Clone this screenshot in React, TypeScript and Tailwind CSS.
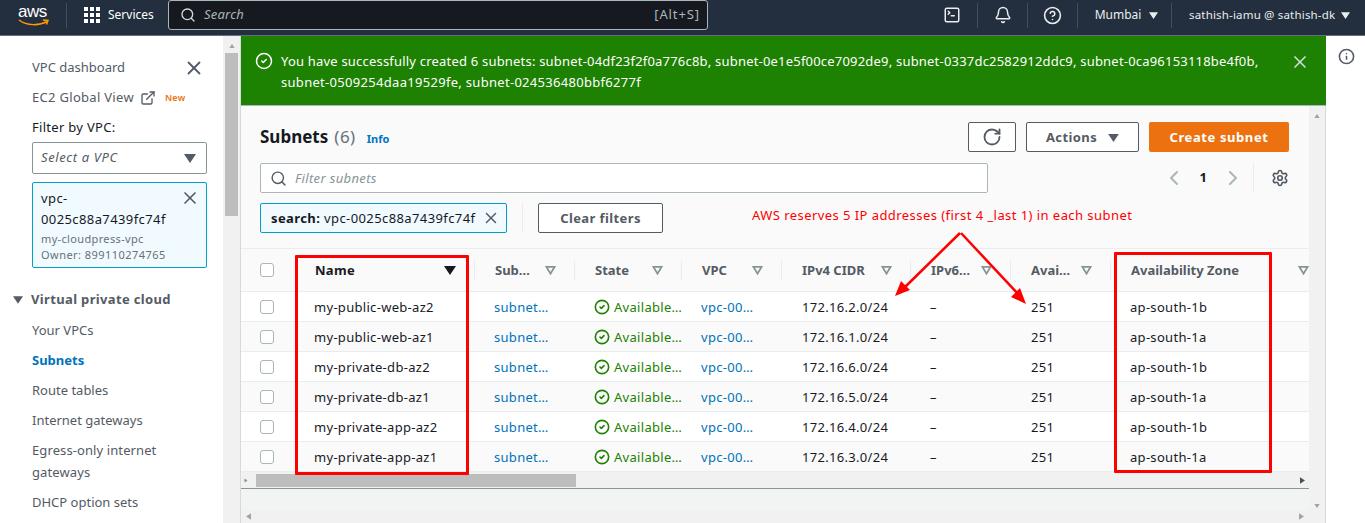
import React from 'react';
import { CircleCheck, ExternalLink, RotateCw, Settings, ChevronLeft, ChevronRight, Search, X, Bell, CircleHelp, Info, SquareTerminal } from 'lucide-react';

const rows = [
    { name: 'my-public-web-az2', cidr: '172.16.2.0/24', az: 'ap-south-1b' },
    { name: 'my-public-web-az1', cidr: '172.16.1.0/24', az: 'ap-south-1a' },
    { name: 'my-private-db-az2', cidr: '172.16.6.0/24', az: 'ap-south-1b' },
    { name: 'my-private-db-az1', cidr: '172.16.5.0/24', az: 'ap-south-1a' },
    { name: 'my-private-app-az2', cidr: '172.16.4.0/24', az: 'ap-south-1b' },
    { name: 'my-private-app-az1', cidr: '172.16.3.0/24', az: 'ap-south-1a' },
];

const Caret = ({ className }: { className: string }) => (
    <svg viewBox="0 0 12 9" className={className} fill="currentColor">
        <path d="M0 0h12L6 9z" />
    </svg>
);

const SortIcon = () => (
    <svg viewBox="0 0 12 10" className="w-[11px] h-[9px] text-[#879596] shrink-0" fill="none" stroke="currentColor" strokeWidth="2">
        <path d="M1.5 1h9L6 8.5z" />
    </svg>
);

const HeaderCell = ({ label, width }: { label: string; width: string }) => (
    <div className={`${width} h-full flex items-center shrink-0`}>
        <div className="flex-1 h-5 flex items-center justify-between border-r border-[#eaeded] pl-[20px] pr-[18px]">
            <span className="font-bold text-[#545b64] pt-[2px]">{label}</span>
            <SortIcon />
        </div>
    </div>
);

const Checkbox = () => <div className="w-[14px] h-[14px] rounded-[3px] border border-[#aab7b8] bg-white" />;

const Divider = () => <div className="w-px h-[25px] bg-[#414d5c] shrink-0" />;

export default function App() {
    return (
        <div className="w-[1365px] h-[523px] overflow-hidden relative bg-white text-[13px] text-[#16191f] font-['Noto_Sans',sans-serif]">
            <header className="h-9 pb-[5px] bg-[#232f3e] border-b border-[#687078] flex items-center text-white text-[12px]">
                <div className="w-[66px] pl-[18px] pt-[2px] flex flex-col items-start">
                    <span className="font-['Liberation_Sans',sans-serif] text-[17px] leading-[14px] tracking-[-0.5px]">aws</span>
                    <svg viewBox="0 0 32 8" className="w-[32px] h-2">
                        <path d="M1 1c8 6 20 6 29 1M25 1l5 .5-1.500 4" fill="none" stroke="#ff9900" strokeWidth="1.500" />
                    </svg>
                </div>
                <Divider />
                <div className="w-[101px] pl-[17px] flex items-center gap-2">
                    <div className="grid grid-cols-3 gap-[2px] w-[16px] shrink-0">
                        {Array.from({ length: 9 }).map((_, i) => (
                            <div key={i} className="w-1 h-1 bg-white" />
                        ))}
                    </div>
                    <span className="text-[12px]">Services</span>
                </div>
                <div className="w-[540px] h-[30px] bg-[#16191f] border border-[#aab7b8] rounded-[3px] flex items-center pl-[11px] pr-[7px] text-[#aab7b8] shrink-0">
                    <Search size={16} strokeWidth={2} className="text-[#d5dbdb] mr-[8px]" />
                    <span className="italic text-[13px] flex-1 tracking-[0.2px]">Search</span>
                    <span className="text-[13px] tracking-[0.9px] text-[#aab7b8]">[Alt+S]</span>
                </div>
                <div className="flex-1 flex items-center justify-end text-[#eaeded]">
                    <SquareTerminal size={18} strokeWidth={2} className="mr-[16px]" />
                    <Divider />
                    <div className="w-[49px] flex justify-center"><Bell size={18} strokeWidth={2} /></div>
                    <Divider />
                    <div className="w-[49px] flex justify-center"><CircleHelp size={19} strokeWidth={2} /></div>
                    <Divider />
                    <div className="w-[93px] flex items-center justify-center gap-2 text-[12px] pl-[4px]">
                        Mumbai <Caret className="w-[9px] h-[7px]" />
                    </div>
                    <Divider />
                    <div className="w-[193px] flex items-center pl-[17px] gap-[6px] text-[11.500px] tracking-[0.18px] whitespace-nowrap">
                        sathish-iamu @ sathish-dk <Caret className="w-[9px] h-[7px]" />
                    </div>
                </div>
            </header>

            <div className="flex h-[487px]">
                <aside className="w-[223px] shrink-0 pl-8 pr-4 pt-[20px] text-[#545b64]">
                    <div className="flex items-center justify-between h-[24px]">
                        <span className="text-[13px]">VPC dashboard</span>
                        <X size={22} strokeWidth={2} className="mr-[2px]" />
                    </div>
                    <div className="flex items-center h-[22px] mt-[7px] tracking-[0.3px]">
                        <span>EC2 Global View</span>
                        <ExternalLink size={16} strokeWidth={2} className="ml-[6px]" />
                        <span className="ml-[9px] text-[9px] font-semibold text-[#ec7211]">New</span>
                    </div>
                    <div className="mt-[8px] text-[#16191f] h-[20px] leading-[20px] tracking-[0.3px]">Filter by VPC:</div>
                    <div className="mt-[5px] h-[32px] border border-[#879596] rounded-[2px] flex items-center justify-between pl-2 pr-[10px] italic tracking-[0.6px]">
                        Select a VPC
                        <Caret className="w-[12px] h-[9px]" />
                    </div>
                    <div className="mt-[8px] h-[86px] border border-[#00a1c9] rounded-[2px] bg-[#f1faff] pl-2 pr-[8px] pt-[5px] relative">
                        <div className="text-[#16191f] leading-[21px] w-[150px] break-words tracking-[0.4px]">vpc-<br />0025c88a7439fc74f</div>
                        <div className="text-[11px] leading-[16px] mt-[1px] text-[#687078] tracking-[0.35px]">my-cloudpress-vpc</div>
                        <div className="text-[11px] leading-[16px] text-[#687078] tracking-[0.45px]">Owner: 899110274765</div>
                        <X size={20} strokeWidth={2} className="absolute right-[6px] top-[5px]" />
                    </div>
                    <div className="-ml-[19px] mt-[22px] flex items-center gap-[8px] font-bold tracking-[0.35px]">
                        <Caret className="w-[10px] h-[8px]" />
                        Virtual private cloud
                    </div>
                    <nav className="flex flex-col mt-[9px] leading-[22px] gap-[8px]">
                        <span>Your VPCs</span>
                        <span className="font-bold text-[#0073bb]">Subnets</span>
                        <span>Route tables</span>
                        <span>Internet gateways</span>
                        <span className="tracking-[0.1px]">Egress-only internet gateways</span>
                        <span>DHCP option sets</span>
                    </nav>
                </aside>

                <div className="w-[17px] shrink-0 bg-[#f1f1f1] flex flex-col items-center pt-[8px]">
                    <Caret className="w-[8px] h-[4px] rotate-180 text-[#a3a3a3]" />
                    <div className="w-[13px] h-[163px] mt-[5px] bg-[#bdbdbd]" />
                </div>

                <main className="w-[1086px] shrink-0 border-l border-[#d5dbdb] flex flex-col">
                    <div className="h-[70px] bg-[#1d8102] border-b border-[#aab7b8] text-white flex pl-[14px] pr-[16px] pt-[15px] shrink-0">
                        <CircleCheck size={18} strokeWidth={2} className="mr-[8px] mt-[1px] shrink-0" />
                        <div className="leading-[21px] flex-1 tracking-[0.2px] text-[13px] whitespace-nowrap">
                            You have successfully created 6 subnets: subnet-04df23f2f0a776c8b, subnet-0e1e5f00ce7092de9, subnet-0337dc2582912ddc9, subnet-0ca96153118be4f0b,<br />
                            <span className="tracking-[0.3px]">subnet-0509254daa19529fe, subnet-024536480bbf6277f</span>
                        </div>
                        <X size={20} strokeWidth={2} className="text-[#d5dbdb] mt-[1px] ml-2" />
                    </div>

                    <div className="flex-1 flex min-h-0 bg-[#f2f3f3]">
                        <div className="w-[1068px] shrink-0 flex flex-col">
                            <section className="bg-[#fafafa] border-b border-[#879596] h-[383px] shrink-0 flex flex-col">
                                <div className="pl-[19px] pr-[20px] pt-[15px] flex items-center justify-between h-[46px]">
                                    <div className="flex items-baseline">
                                        <h1 className="text-[17px] font-bold">Subnets</h1>
                                        <span className="text-[17px] text-[#687078] ml-[6px] tracking-[0.5px]">(6)</span>
                                        <span className="ml-[11px] text-[11px] font-bold text-[#0073bb]">Info</span>
                                    </div>
                                    <div className="flex items-center">
                                        <button className="w-[48px] h-[30px] bg-white border border-[#545b64] rounded-[2px] flex items-center justify-center text-[#545b64]">
                                            <RotateCw size={20} strokeWidth={2.2} />
                                        </button>
                                        <button className="ml-[10px] w-[113px] h-[30px] pt-[2px] bg-white border border-[#545b64] rounded-[2px] flex items-center justify-center gap-[11px] font-bold text-[#545b64] tracking-[0.4px]">
                                            Actions <Caret className="w-[11px] h-[8px]" />
                                        </button>
                                        <button className="ml-[10px] w-[140px] h-[30px] pt-[2px] bg-[#ec7211] rounded-[2px] font-bold text-white tracking-[0.6px]">
                                            Create subnet
                                        </button>
                                    </div>
                                </div>
                                <div className="flex items-center pl-[19px] pr-[20px] mt-[11px]">
                                    <div className="w-[728px] h-[30px] pt-[1px] bg-white border border-[#aab7b8] rounded-[2px] flex items-center pl-[9px] italic text-[#879596] tracking-[0.35px]">
                                        <Search size={17} strokeWidth={2} className="text-[#545b64] mr-[8px]" />
                                        Filter subnets
                                    </div>
                                    <div className="ml-auto flex items-center text-[#aab7b8]">
                                        <ChevronLeft size={24} strokeWidth={2} />
                                        <span className="mx-[14px] font-bold text-[#16191f]">1</span>
                                        <ChevronRight size={24} strokeWidth={2} />
                                        <div className="w-px h-[30px] bg-[#eaeded] ml-[8px] mr-[17px]" />
                                        <Settings size={18} strokeWidth={2.2} className="text-[#545b64]" />
                                    </div>
                                </div>
                                <div className="flex items-center pl-[19px] mt-[10px]">
                                    <div className="w-[247px] h-[30px] bg-[#f1faff] border border-[#00a1c9] rounded-[2px] flex items-center pl-[10px] pr-[6px] justify-between whitespace-nowrap tracking-[0.4px]">
                                        <span className="pt-[1px]"><b>search:</b> vpc-0025c88a7439fc74f</span>
                                        <X size={18} strokeWidth={2} className="text-[#545b64]" />
                                    </div>
                                    <div className="w-px h-[30px] bg-[#eaeded] mx-[15px]" />
                                    <button className="w-[125px] h-[30px] pt-[1px] bg-white border border-[#545b64] rounded-[2px] font-bold text-[#545b64] tracking-[0.4px]">
                                        Clear filters
                                    </button>
                                </div>

                                <div className="mt-[15px] border-t border-[#eaeded]">
                                    <div className="h-[43px] flex items-center border-b border-[#eaeded]">
                                        <div className="w-[55px] shrink-0 pl-[19px]"><Checkbox /></div>
                                        <div className="w-[179px] shrink-0 h-5 flex items-center justify-between border-r border-[#eaeded] pl-[19px] pr-[18px]">
                                            <span className="font-bold tracking-[0.3px] pt-[2px]">Name</span>
                                            <Caret className="w-[12px] h-[9px]" />
                                        </div>
                                        <HeaderCell label="Sub…" width="w-[100px]" />
                                        <HeaderCell label="State" width="w-[107px]" />
                                        <HeaderCell label="VPC" width="w-[100px]" />
                                        <HeaderCell label="IPv4 CIDR" width="w-[129px]" />
                                        <HeaderCell label="IPv6…" width="w-[100px]" />
                                        <HeaderCell label="Avai…" width="w-[100px]" />
                                        <div className="flex-1 flex items-center justify-between pl-[20px] font-bold text-[#545b64]">
                                            <span className="pt-[2px]">Availability Zone</span>
                                            <SortIcon />
                                        </div>
                                    </div>
                                    {rows.map((row, i) => (
                                        <div key={row.name} className={`h-[30px] flex items-center border-b border-[#eaeded] tracking-[0.3px] ${i % 2 === 0 ? 'bg-white' : 'bg-[#fafafa]'}`}>
                                            <div className="w-[55px] shrink-0 pl-[19px]"><Checkbox /></div>
                                            <div className="w-[179px] shrink-0 pl-[18px] pt-[2px]">{row.name}</div>
                                            <div className="w-[100px] shrink-0 pl-[19px] pt-[2px] text-[#0073bb]">subnet…</div>
                                            <div className="w-[107px] shrink-0 pl-[19px] flex items-center gap-[4px] text-[#1d8102] whitespace-nowrap">
                                                <CircleCheck size={16} strokeWidth={2.4} className="shrink-0" />
                                                <span className="pt-[2px]">Available…</span>
                                            </div>
                                            <div className="w-[100px] shrink-0 pl-[19px] pt-[2px] text-[#0073bb]">vpc-00…</div>
                                            <div className="w-[129px] shrink-0 pl-[20px] pt-[2px]">{row.cidr}</div>
                                            <div className="w-[100px] shrink-0 pl-[19px] pt-[2px]">–</div>
                                            <div className="w-[100px] shrink-0 pl-[20px] pt-[2px]">251</div>
                                            <div className="flex-1 pl-[19px] pt-[2px]">{row.az}</div>
                                        </div>
                                    ))}
                                    <div className="h-[16px] bg-[#f1f1f1] flex items-center px-[3px] justify-between">
                                        <Caret className="w-[4px] h-[7px] -rotate-90 text-[#8a8a8a]" />
                                        <div className="w-[320px] h-[13px] bg-[#bdbdbd] ml-[8px] mr-auto" />
                                        <Caret className="w-[7px] h-[5px] -rotate-90 text-[#505050]" />
                                    </div>
                                </div>
                            </section>
                            <div className="flex-1 bg-[#f2f3f3]" />
                            <div className="h-[13px] bg-[#f1f1f1] flex items-center px-[4px] justify-between shrink-0">
                                <Caret className="w-[7px] h-[5px] rotate-90 text-[#a3a3a3]" />
                                <Caret className="w-[7px] h-[5px] -rotate-90 text-[#a3a3a3]" />
                            </div>
                        </div>
                        <div className="w-[17px] shrink-0 bg-[#f1f1f1] flex flex-col items-center justify-between pt-[8px] pb-[15px] border-r border-[#d5dbdb]">
                            <Caret className="w-[8px] h-[4px] rotate-180 text-[#a3a3a3]" />
                            <Caret className="w-[8px] h-[4px] text-[#a3a3a3]" />
                        </div>
                    </div>
                </main>

                <div className="flex-1 flex justify-center pt-[12px] pl-[2px]">
                    <Info size={17} strokeWidth={2.2} className="text-[#545b64]" />
                </div>
            </div>

            {/* red annotations over the table */}
            <div className="absolute left-[295px] top-[255px] w-[174px] h-[220px] border-[3px] border-[#ff0000] rounded-[1px]" />
            <div className="absolute left-[1114px] top-[252px] w-[158px] h-[221px] border-[3px] border-[#ff0000] rounded-[1px]" />
            <div className="absolute left-[752px] top-[206px] text-[13px] leading-[18px] text-[#ff0000] whitespace-nowrap tracking-[0.44px]">
                AWS reserves 5 IP addresses (first 4 _last 1) in each subnet
            </div>
            <svg className="absolute left-0 top-0 w-[1365px] h-[523px] pointer-events-none" viewBox="0 0 1365 523">
                <path d="M960 233L903 289M961 233L1020 296" fill="none" stroke="#ff0000" strokeWidth="2.500" />
                <path d="M895 296l6-15 9 9z" fill="#ff0000" />
                <path d="M1026 304l-15-7 9-9z" fill="#ff0000" />
            </svg>
        </div>
    );
}
